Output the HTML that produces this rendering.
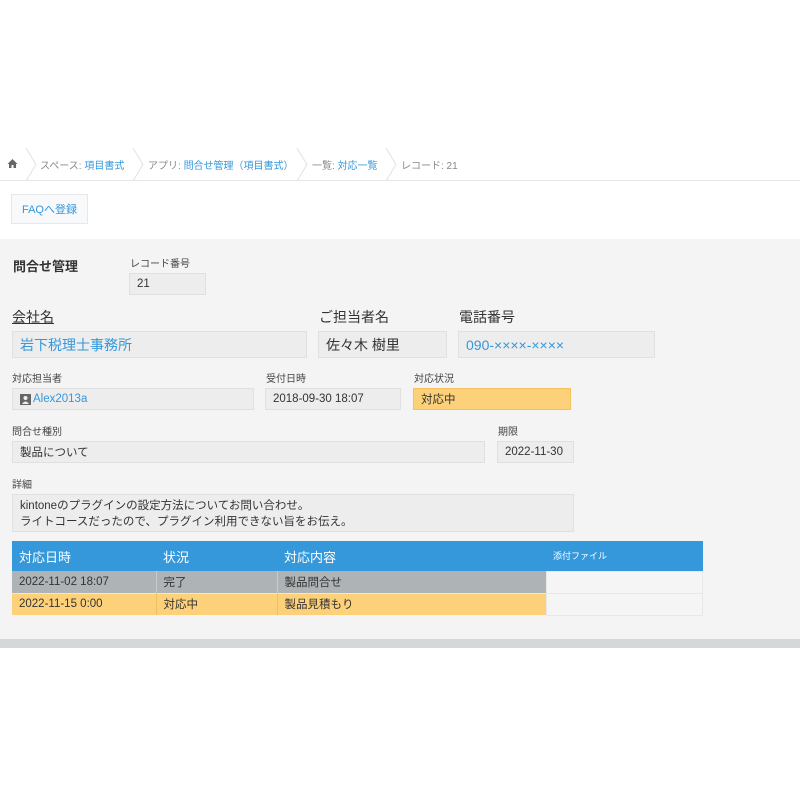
<!DOCTYPE html>
<html><head><meta charset="utf-8"><style>
*{margin:0;padding:0;box-sizing:border-box}
body{width:800px;height:800px;background:#fff;font-family:"Liberation Sans","Noto Sans CJK JP",sans-serif;position:relative;overflow:hidden;color:#333}
.a{position:absolute}
.bc{top:148px;left:0;width:800px;height:33px;border-bottom:1px solid #e6e6e6;font-size:10px;color:#888}
.bc span{position:absolute;top:9px;white-space:nowrap}
.bl{color:#3498db}
.gray{top:239px;left:0;width:800px;height:400px;background:#f4f4f4}
.bar{top:639px;left:0;width:800px;height:9px;background:#d5d8d8}
.box{position:absolute;background:#ededed;border:1px solid #e0e0e0;font-size:11.5px;padding-left:7px;display:flex;align-items:center;color:#333}
.lb{position:absolute;font-size:10px;color:#444;white-space:nowrap}
.lb2{position:absolute;font-size:14px;color:#333;white-space:nowrap}
.sep{position:absolute;top:0;width:12px;height:33px}
td{font-size:11.5px;padding-left:7px;height:22px}
</style></head><body>
<div class="a bc">
<svg class="a" style="left:7px;top:10px" width="11" height="11" viewBox="0 0 11 11"><path d="M5.5 1L0.5 6H2V10H4.5V7H6.5V10H9V6H10.5Z" fill="#666"/></svg>
<svg class="sep" style="left:25px" viewBox="0 0 12 33"><path d="M1 0L11 16.5L1 33" fill="none" stroke="#e2e2e2"/></svg>
<span style="left:40px">スペース: <span class="bl" style="position:static">項目書式</span></span>
<svg class="sep" style="left:132px" viewBox="0 0 12 33"><path d="M1 0L11 16.5L1 33" fill="none" stroke="#e2e2e2"/></svg>
<span style="left:148px">アプリ: <span class="bl" style="position:static">問合せ管理（項目書式）</span></span>
<svg class="sep" style="left:296px" viewBox="0 0 12 33"><path d="M1 0L11 16.5L1 33" fill="none" stroke="#e2e2e2"/></svg>
<span style="left:312px">一覧: <span class="bl" style="position:static">対応一覧</span></span>
<svg class="sep" style="left:385px" viewBox="0 0 12 33"><path d="M1 0L11 16.5L1 33" fill="none" stroke="#e2e2e2"/></svg>
<span style="left:401px">レコード: 21</span>
</div>
<div class="a" style="left:11px;top:194px;width:77px;height:30px;background:#f7f9fa;border:1px solid #e8e8e8;color:#3498db;font-size:11px;display:flex;align-items:center;justify-content:center">FAQへ登録</div>
<div class="a gray"></div>
<div class="a bar"></div>
<div class="a" style="left:13px;top:256px;font-size:13px;font-weight:bold;color:#333">問合せ管理</div>
<div class="lb" style="left:130px;top:255px">レコード番号</div>
<div class="box" style="left:129px;top:273px;width:77px;height:22px">21</div>
<div class="lb2" style="left:12px;top:307px;text-decoration:underline">会社名</div>
<div class="lb2" style="left:319px;top:307px">ご担当者名</div>
<div class="lb2" style="left:459px;top:307px">電話番号</div>
<div class="box" style="left:12px;top:331px;width:295px;height:27px;font-size:14px;color:#3498db">岩下税理士事務所</div>
<div class="box" style="left:318px;top:331px;width:129px;height:27px;font-size:14px">佐々木 樹里</div>
<div class="box" style="left:458px;top:331px;width:197px;height:27px;font-size:14px;color:#3498db">090-××××-××××</div>
<div class="lb" style="left:12px;top:370px">対応担当者</div>
<div class="lb" style="left:266px;top:370px">受付日時</div>
<div class="lb" style="left:414px;top:370px">対応状況</div>
<div class="box" style="left:12px;top:388px;width:242px;height:22px;padding-left:7px;color:#3498db"><svg width="11" height="11" viewBox="0 0 11 11" style="margin-right:2px"><rect width="11" height="11" fill="#666"/><circle cx="5.5" cy="4" r="2" fill="#eee"/><path d="M2 10Q5.5 5 9 10Z" fill="#eee"/></svg>Alex2013a</div>
<div class="box" style="left:265px;top:388px;width:136px;height:22px">2018-09-30 18:07</div>
<div class="box" style="left:413px;top:388px;width:158px;height:22px;background:#fdd07a;border-color:#f5c060">対応中</div>
<div class="lb" style="left:12px;top:423px">問合せ種別</div>
<div class="lb" style="left:498px;top:423px">期限</div>
<div class="box" style="left:12px;top:441px;width:473px;height:22px">製品について</div>
<div class="box" style="left:497px;top:441px;width:77px;height:22px">2022-11-30</div>
<div class="lb" style="left:12px;top:476px">詳細</div>
<div class="box" style="left:12px;top:494px;width:562px;height:38px;line-height:16px;display:block;padding-top:3px">kintoneのプラグインの設定方法についてお問い合わせ。<br>ライトコースだったので、プラグイン利用できない旨をお伝え。</div>
<table class="a" style="left:12px;top:541px;width:691px;border-collapse:collapse">
<tr style="background:#3498db;color:#fff;height:30px"><td style="width:144px;font-size:13px">対応日時</td><td style="width:121px;font-size:13px">状況</td><td style="width:269px;font-size:13px">対応内容</td><td style="font-size:9px">添付ファイル</td></tr>
<tr><td style="background:#aeb3b5;border-right:1px solid #c8cbcc">2022-11-02 18:07</td><td style="background:#aeb3b5;border-right:1px solid #c8cbcc">完了</td><td style="background:#aeb3b5">製品問合せ</td><td style="background:#f5f5f5;border:1px solid #e8e8e8"></td></tr>
<tr><td style="background:#fdd07a;border-top:1px solid #e8e8e8;border-right:1px solid #f0c060">2022-11-15 0:00</td><td style="background:#fdd07a;border-top:1px solid #e8e8e8;border-right:1px solid #f0c060">対応中</td><td style="background:#fdd07a;border-top:1px solid #e8e8e8">製品見積もり</td><td style="background:#f5f5f5;border:1px solid #e8e8e8"></td></tr>
</table>
</body></html>
